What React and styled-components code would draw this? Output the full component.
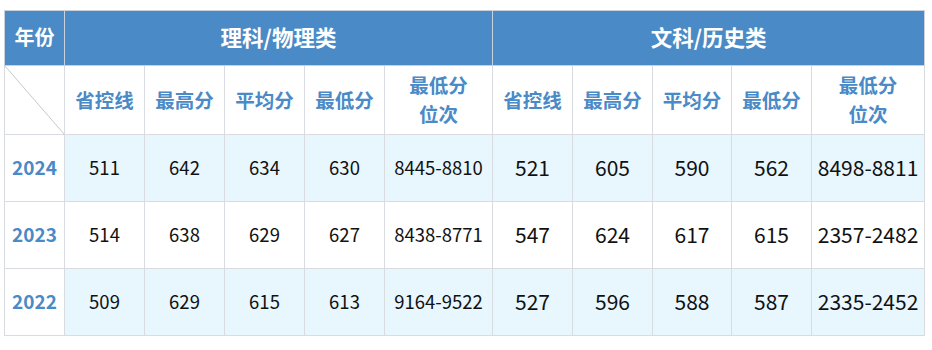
import React from 'react';
import styled, { createGlobalStyle } from 'styled-components';

const GlobalStyle = createGlobalStyle`
  body {
    margin: 0;
    background: #fff;
    font-family: "Noto Sans CJK SC", "Noto Sans", sans-serif;
  }
`;

const Wrap = styled.div`
  padding: 10px 8px 0 4px;
`;

const Table = styled.table`
  width: 920px;
  border-collapse: collapse;
  table-layout: fixed;
  border: 1px solid #d3d6da;
`;

const HeadCell = styled.th`
  height: 50px;
  padding: 0 0 4px;
  background: #4a8ac6;
  color: #fff;
  font-size: ${(p) => (p.$group ? '21.5px' : '20px')};
  font-weight: 700;
  text-align: center;
  border: 1px solid #c9d2dc;
`;

const SubCell = styled.th`
  height: 66px;
  padding: 0 0 2px;
  background: #fff;
  color: #4a8ac6;
  font-size: 19.5px;
  font-weight: 700;
  line-height: 29px;
  text-align: center;
  border: 1px solid #d8dbdf;
`;

const CornerCell = styled.th`
  position: relative;
  padding: 0;
  background: #fff;
  border: 1px solid #d8dbdf;

  svg {
    position: absolute;
    inset: 0;
    width: 100%;
    height: 100%;
  }
`;

const YearCell = styled.td`
  height: 63px;
  padding: 0 0 3px;
  background: #fff;
  color: #4a8ac6;
  font-size: 19px;
  font-weight: 700;
  text-align: center;
  border: 1px solid #d8dbdf;
`;

const DataCell = styled.td`
  padding: 0 0 3px;
  background: ${(p) => (p.$striped ? '#e8f6fe' : '#fff')};
  color: #111;
  font-size: ${(p) => (p.$big ? '21px' : '18.5px')};
  text-align: center;
  white-space: nowrap;
  border: 1px solid #d8dbdf;
`;

const subHeads = ['省控线', '最高分', '平均分', '最低分', '最低分\n位次'];

const rows = [
  { year: '2024', sci: ['511', '642', '634', '630', '8445-8810'], art: ['521', '605', '590', '562', '8498-8811'] },
  { year: '2023', sci: ['514', '638', '629', '627', '8438-8771'], art: ['547', '624', '617', '615', '2357-2482'] },
  { year: '2022', sci: ['509', '629', '615', '613', '9164-9522'], art: ['527', '596', '588', '587', '2335-2452'] },
];

const widths = [60, 80, 80, 80, 80, 108, 80, 80, 79, 80, 113];

function SubHeader({ text }) {
  const parts = text.split('\n');
  return (
    <SubCell>
      {parts.map((t, i) => (
        <div key={i}>{t}</div>
      ))}
    </SubCell>
  );
}

export default function App() {
  return (
    <Wrap>
      <GlobalStyle />
      <Table>
        <colgroup>
          {widths.map((w, i) => (
            <col key={i} style={{ width: w }} />
          ))}
        </colgroup>
        <thead>
          <tr>
            <HeadCell>年份</HeadCell>
            <HeadCell colSpan={5} $group>理科/物理类</HeadCell>
            <HeadCell colSpan={5} $group>文科/历史类</HeadCell>
          </tr>
          <tr>
            <CornerCell>
              <svg viewBox="0 0 60 69" preserveAspectRatio="none">
                <line x1="0" y1="0" x2="60" y2="69" stroke="#c4c7cb" strokeWidth="1" />
              </svg>
            </CornerCell>
            {subHeads.map((t, i) => (
              <SubHeader key={'s' + i} text={t} />
            ))}
            {subHeads.map((t, i) => (
              <SubHeader key={'a' + i} text={t} />
            ))}
          </tr>
        </thead>
        <tbody>
          {rows.map((r, ri) => (
            <tr key={r.year}>
              <YearCell>{r.year}</YearCell>
              {r.sci.map((v, i) => (
                <DataCell key={'s' + i} $striped={ri !== 1}>{v}</DataCell>
              ))}
              {r.art.map((v, i) => (
                <DataCell key={'a' + i} $striped={ri !== 1} $big>{v}</DataCell>
              ))}
            </tr>
          ))}
        </tbody>
      </Table>
    </Wrap>
  );
}
